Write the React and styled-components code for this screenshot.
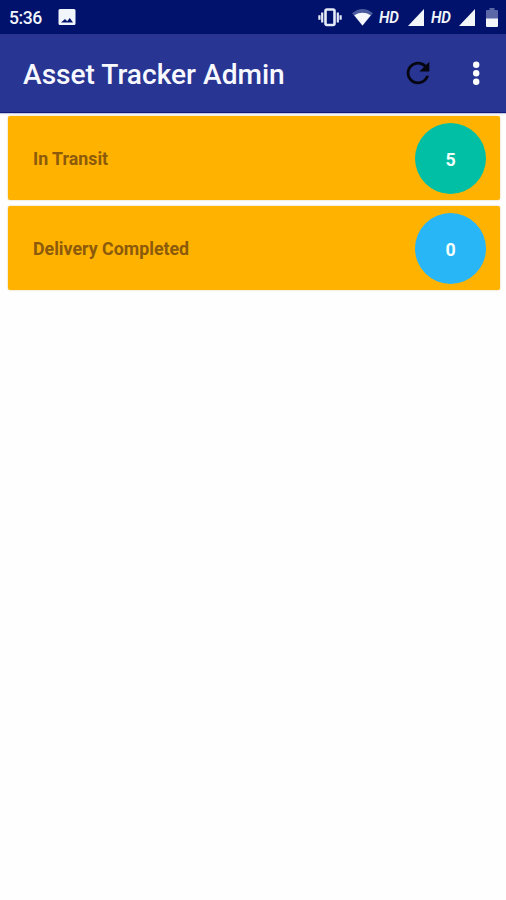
import React from "react";
import styled, { createGlobalStyle } from "styled-components";

const GlobalStyle = createGlobalStyle`
  * { box-sizing: border-box; }
  body { margin: 0; background: #fefefe; font-family: Roboto, "Liberation Sans", sans-serif; }
`;

const Screen = styled.div`
  width: 100%;
  min-height: 900px;
  display: flex;
  flex-direction: column;
`;

const StatusBar = styled.header`
  height: 34px;
  padding: 0 8px 0 9px;
  display: flex;
  align-items: center;
  justify-content: space-between;
  background: #00126b;
  color: #f1f5fc;
`;

const StatusGroup = styled.div`
  display: flex;
  align-items: center;
  height: 34px;
`;

const Clock = styled.time`
  width: 49px;
  padding-top: 2px;
  font-size: 17.6px;
  font-weight: 500;
  line-height: 20px;
  letter-spacing: -0.5px;
`;

const StatusIcon = styled.svg`
  display: block;
  flex: none;
  margin-right: ${(p) => p.$gap || 0}px;
`;

const NetworkLabel = styled.span`
  width: 22px;
  margin-right: ${(p) => p.$gap}px;
  padding-top: 1px;
  font-size: 16.6px;
  font-style: italic;
  font-weight: 600;
  line-height: 20px;
  letter-spacing: -0.2px;
  transform: scaleX(0.92);
  transform-origin: left center;
`;

const AppBar = styled.div`
  height: 79px;
  padding: 0 25px 0 23px;
  display: flex;
  align-items: center;
  background: #283593;
  border-bottom: 1px solid #101a78;
  box-shadow: 0 1px 1px rgba(40, 53, 147, 0.25);
`;

const Title = styled.h1`
  flex: 1;
  margin: 3px 0 0;
  color: #f7f9ff;
  font-size: 28.1px;
  font-weight: 500;
  line-height: 34px;
  white-space: nowrap;
`;

const IconButton = styled.button`
  display: block;
  flex: none;
  margin: 0 ${(p) => p.$gap || 0}px 0 0;
  padding: 0;
  border: 0;
  background: none;
  color: ${(p) => p.$color};

  svg { display: block; }
`;

const CardList = styled.main`
  display: flex;
  flex-direction: column;
  gap: 6px;
  padding: 3px 6px 0 8px;
`;

const Card = styled.section`
  height: 84px;
  padding: 0 14px 0 25px;
  display: flex;
  align-items: center;
  justify-content: space-between;
  background: #ffb300;
  border-radius: 2px;
  box-shadow: 0 0 2px rgba(190, 135, 0, 0.45);
`;

const CardLabel = styled.span`
  padding-top: 2px;
  color: #8c5a0b;
  font-size: 17.8px;
  font-weight: 700;
  line-height: 22px;
`;

const CountBadge = styled.span`
  width: 71px;
  height: 71px;
  padding-top: 2px;
  display: flex;
  align-items: center;
  justify-content: center;
  border-radius: 50%;
  background: ${(p) => p.$color};
  color: #f4fffc;
  font-size: 17.8px;
  font-weight: 700;
`;

const cards = [
  { label: "In Transit", count: 5, color: "#00bfa5" },
  { label: "Delivery Completed", count: 0, color: "#29b6f6" },
];

const PictureIcon = () => (
  <StatusIcon width="18" height="18" viewBox="0 0 18 18">
    <path fill="#f1f5fc" fillRule="evenodd" d="M2 1h14a1.5 1.5 0 0 1 1.5 1.5v13a1.5 1.5 0 0 1-1.5 1.5H2a1.5 1.5 0 0 1-1.5-1.5v-13A1.5 1.5 0 0 1 2 1ZM3 14.500h12l-3.200-4.500-2.600 3.200-2.200-2.200Z" />
  </StatusIcon>
);

const VibrateIcon = () => (
  <StatusIcon $gap={10} width="24" height="20" viewBox="0 0 24 20" fill="none" stroke="#e6ebf7">
    <rect x="7.500" y="2.500" width="9" height="15.500" rx="1.500" strokeWidth="2.600" />
    <path d="M4.200 5.500v10M19.800 5.500v10M1.400 8.300v4.500M22.600 8.300v4.500" strokeWidth="2.200" />
  </StatusIcon>
);

const WifiIcon = () => (
  <StatusIcon $gap={6} width="21" height="18" viewBox="0 0 21 18">
    <path fill="#4b5b9f" d="M0 5.200Q10.500-3.400 21 5.200L10.500 17.700Z" />
    <path fill="#f5f8fc" d="M2.200 7.200Q10.500 2.400 18.800 7.200L10.500 17.500Z" />
  </StatusIcon>
);

const SignalIcon = ({ gap }) => (
  <StatusIcon $gap={gap} width="17" height="18" viewBox="0 0 17 18">
    <path fill="#f2f6f8" d="M16 1v17H0Z" />
  </StatusIcon>
);

const BatteryIcon = () => (
  <StatusIcon width="12" height="20" viewBox="0 0 12 20">
    <path fill="#5a68a8" d="M3.500 1h5v2H11q1 0 1 1v8H0V4q0-1 1-1h2.500Z" />
    <path fill="#f2f6f8" d="M0 11.500h12v7.500q0 1-1 1H1q-1 0-1-1Z" />
  </StatusIcon>
);

export default function App() {
  return (
    <Screen>
      <GlobalStyle />
      <StatusBar>
        <StatusGroup>
          <Clock>5:36</Clock>
          <PictureIcon />
        </StatusGroup>
        <StatusGroup>
          <VibrateIcon />
          <WifiIcon />
          <NetworkLabel $gap={7}>HD</NetworkLabel>
          <SignalIcon gap={6} />
          <NetworkLabel $gap={6}>HD</NetworkLabel>
          <SignalIcon gap={10} />
          <BatteryIcon />
        </StatusGroup>
      </StatusBar>
      <AppBar>
        <Title>Asset Tracker Admin</Title>
        <IconButton $color="#05060f" $gap={37} aria-label="Refresh">
          <svg width="34" height="34" viewBox="0 0 24 24" fill="currentColor">
            <path d="M17.650 6.350A7.958 7.958 0 0 0 12 4c-4.420 0-7.990 3.580-7.990 8s3.570 8 7.990 8c3.730 0 6.840-2.550 7.730-6h-2.080A5.990 5.990 0 0 1 12 18c-3.310 0-6-2.690-6-6s2.690-6 6-6c1.660 0 3.140.69 4.220 1.780L13 11h7V4l-2.350 2.350z" />
          </svg>
        </IconButton>
        <IconButton $color="#fff" aria-label="More options">
          <svg width="9" height="26" viewBox="0 0 9 26" fill="currentColor">
            <circle cx="4.200" cy="4.700" r="3.200" />
            <circle cx="4.200" cy="13.200" r="3.200" />
            <circle cx="4.200" cy="21.700" r="3.200" />
          </svg>
        </IconButton>
      </AppBar>
      <CardList>
        {cards.map(({ label, count, color }) => (
          <Card key={label}>
            <CardLabel>{label}</CardLabel>
            <CountBadge $color={color}>{count}</CountBadge>
          </Card>
        ))}
      </CardList>
    </Screen>
  );
}
